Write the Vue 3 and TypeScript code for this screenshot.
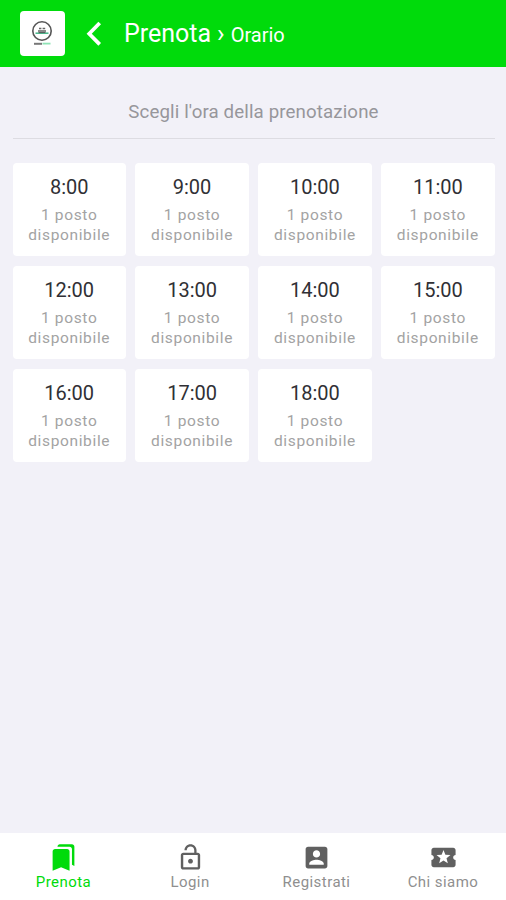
<script setup lang="ts">
interface Slot {
  time: string
  seats: number
}

interface Tab {
  label: string
  icon: string
  active?: boolean
}

const slots: Slot[] = Array.from({ length: 11 }, (_, i) => ({ time: `${i + 8}:00`, seats: 1 }))

const tabs: Tab[] = [
  {
    label: 'Prenota',
    active: true,
    icon: 'M19 18l2 1V3c0-1.1-.9-2-2-2H8.99C7.89 1 7 1.9 7 3h10c1.1 0 2 .9 2 2v13zM15 5H5c-1.1 0-2 .9-2 2v16l7-3 7 3V7c0-1.1-.9-2-2-2z',
  },
  {
    label: 'Login',
    icon: 'M12 17c1.1 0 2-.9 2-2s-.9-2-2-2-2 .9-2 2 .9 2 2 2zm6-9h-1V6c0-2.76-2.24-5-5-5S7 3.24 7 6h1.9c0-1.71 1.39-3.1 3.1-3.1 1.71 0 3.1 1.39 3.1 3.1v2H6c-1.1 0-2 .9-2 2v10c0 1.1.9 2 2 2h12c1.1 0 2-.9 2-2V10c0-1.1-.9-2-2-2zm0 12H6V10h12v10z',
  },
  {
    label: 'Registrati',
    icon: 'M3 5v14c0 1.1.89 2 2 2h14c1.1 0 2-.9 2-2V5c0-1.1-.9-2-2-2H5c-1.11 0-2 .9-2 2zm12 4c0 1.66-1.34 3-3 3s-3-1.34-3-3 1.34-3 3-3 3 1.34 3 3zm-9 8c0-2 4-3.1 6-3.1s6 1.1 6 3.1v1H6v-1z',
  },
  {
    label: 'Chi siamo',
    icon: 'M20 12c0-1.1.9-2 2-2V6c0-1.1-.9-2-2-2H4c-1.1 0-1.99.9-1.99 2v4c1.1 0 1.99.9 1.99 2s-.89 2-2 2v4c0 1.1.9 2 2 2h16c1.1 0 2-.9 2-2v-4c-1.1 0-2-.9-2-2zm-4.42 4.8L12 14.5l-3.58 2.3 1.08-4.12-3.29-2.69 4.24-.25L12 5.8l1.54 3.95 4.24.25-3.29 2.69 1.09 4.11z',
  },
]
</script>

<template>
  <div class="screen">
    <header class="toolbar">
      <div class="logo">
        <svg viewBox="0 0 44 44" aria-hidden="true">
          <circle cx="22" cy="20" r="9.2" fill="none" stroke="#555" stroke-width="1.6" />
          <path d="M19 17.5h2.4M22.6 17.5h2.6M18 20h8" stroke="#666" stroke-width="1.7" />
          <path d="M15.5 22.2h13" stroke="#43b888" stroke-width="1.5" />
          <path d="M18.5 21.6h7" stroke="#555" stroke-width="1" />
          <path d="M14 32.8h8" stroke="#777" stroke-width="2" />
          <path d="M22.5 32.6h8" stroke="#8ee3b5" stroke-width="1.8" />
        </svg>
      </div>
      <svg class="back" viewBox="0 0 16 26" aria-hidden="true">
        <path d="M13.7 2L3.2 12.7l10.5 10.7" />
      </svg>
      <h1 class="title">Prenota <span class="sep">›</span> <span class="sub">Orario</span></h1>
    </header>

    <main class="content">
      <p class="prompt">Scegli l'ora della prenotazione</p>
      <div class="slots">
        <button v-for="slot in slots" :key="slot.time" class="slot" type="button">
          <span class="time">{{ slot.time }}</span>
          <span class="seats">{{ slot.seats }} posto disponibile</span>
        </button>
      </div>
    </main>

    <nav class="tabs">
      <a v-for="tab in tabs" :key="tab.label" class="tab" :class="{ active: tab.active }">
        <svg viewBox="0 0 24 24" aria-hidden="true"><path :d="tab.icon" /></svg>
        <span>{{ tab.label }}</span>
      </a>
    </nav>
  </div>
</template>

<style>
body {
  margin: 0;
}
</style>

<style scoped>
.screen {
  display: flex;
  flex-direction: column;
  height: 900px;
  background: #f2f1f8;
  font-family: Roboto, sans-serif;
}

.toolbar {
  display: flex;
  align-items: center;
  box-sizing: border-box;
  height: 67px;
  padding-left: 20px;
  background: #00db0b;
  color: #fff;
}

.logo {
  width: 44.5px;
  height: 45px;
  border-radius: 4px;
  background: #fff;
}

.logo svg {
  display: block;
  width: 44px;
  height: 44px;
}

.back {
  width: 16px;
  height: 26px;
  margin-left: 21px;
  fill: none;
  stroke: #fff;
  stroke-width: 3.7;
}

.title {
  display: flex;
  align-items: baseline;
  margin: 0 0 0 22.5px;
  padding-top: 2px;
  font-size: 25px;
  font-weight: 400;
  line-height: 30px;
}

.sep {
  margin: 0 6px;
}

.sub {
  font-size: 20px;
}

.content {
  flex: 1;
  padding: 0 11.5px 0 12.5px;
}

.prompt {
  box-sizing: border-box;
  height: 72px;
  margin: 0 0 24px;
  padding-top: 33px;
  border-bottom: 1px solid #dddce2;
  color: #97969b;
  font-size: 18.7px;
  line-height: 24px;
  letter-spacing: 0.12px;
  text-align: center;
}

.slots {
  display: grid;
  grid-template-columns: repeat(4, 1fr);
  gap: 9.7px 9.5px;
}

.slot {
  display: flex;
  flex-direction: column;
  align-items: center;
  height: 93.3px;
  padding: 12px 10px 0;
  border: 0;
  border-radius: 4px;
  background: #fff;
  font-family: inherit;
}

.time {
  color: #303035;
  font-size: 20px;
  line-height: 24px;
}

.seats {
  margin-top: 6px;
  color: #a3a3a3;
  font-size: 15.5px;
  line-height: 20px;
  letter-spacing: 0.65px;
}

.tabs {
  display: grid;
  grid-template-columns: repeat(4, 1fr);
  height: 67px;
  background: #fff;
}

.tab {
  display: flex;
  flex-direction: column;
  align-items: center;
  padding: 10px 0 0 0.5px;
  color: #8f8f8f;
  font-size: 15px;
  line-height: 20px;
  letter-spacing: 0.45px;
}

.tab svg {
  width: 29px;
  height: 29px;
  fill: #606060;
}

.tab.active,
.tab.active svg {
  color: #00db0b;
  fill: #00db0b;
}
</style>
